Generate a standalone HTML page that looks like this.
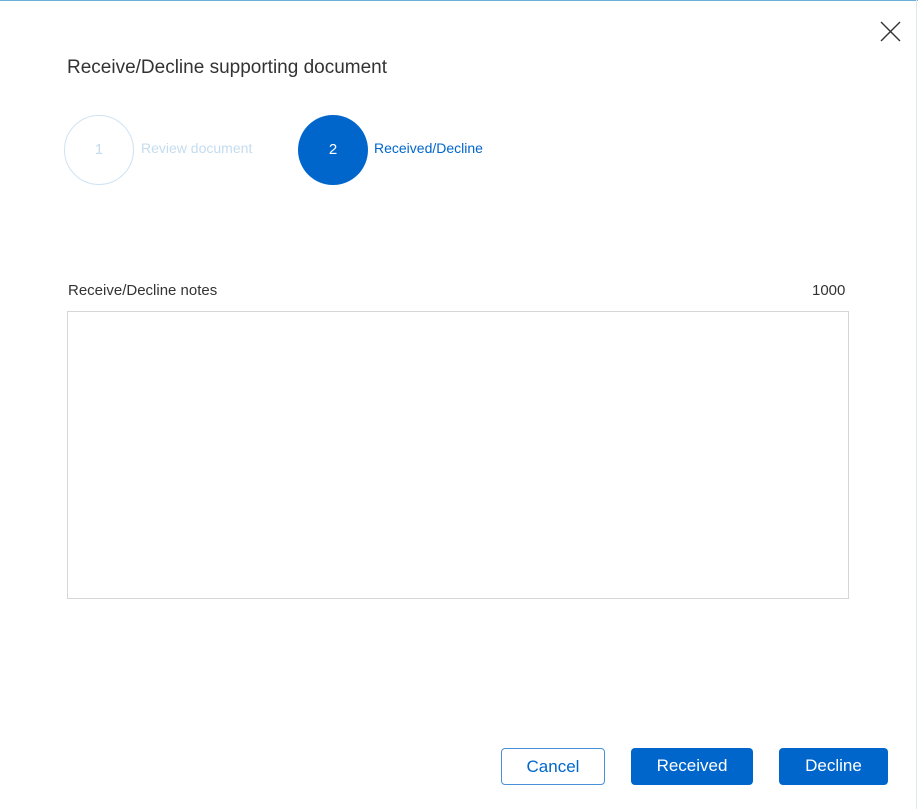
<!DOCTYPE html>
<html><head><style>
body{margin:0;width:918px;height:809px;background:#fff;font-family:"Liberation Sans",sans-serif;position:relative;overflow:hidden}
.top{position:absolute;left:0;top:0;width:918px;height:1px;background:#6ab0d8}
.right{position:absolute;right:1px;top:0;width:1px;height:809px;background:#dfe8ee}
.t{position:absolute;white-space:nowrap}
.c{position:absolute;width:70px;height:70px;border-radius:50%;box-sizing:border-box;text-align:center;line-height:68px;font-size:15px}
.b{position:absolute;top:748px;height:37px;box-sizing:border-box;border-radius:4px;text-align:center;line-height:36px;font-size:17px}
</style></head><body>
<div class="top"></div><div class="right"></div>
<svg style="position:absolute;left:880px;top:21px" width="21" height="21"><path d="M1 1L20 20M20 1L1 20" stroke="#333" stroke-width="1.4"/></svg>
<div class="t" style="left:67px;top:57px;font-size:19px;color:#333">Receive/Decline supporting document</div>
<div class="c" style="left:64px;top:115px;border:1px solid #cfe3f3;color:#c4dcf0">1</div>
<div class="t" style="left:141px;top:140px;font-size:14px;color:#c4dcf0">Review document</div>
<div class="c" style="left:298px;top:115px;background:#0066cc;color:#fff;line-height:70px">2</div>
<div class="t" style="left:374px;top:140px;font-size:14px;color:#0066cc">Received/Decline</div>
<div class="t" style="left:68px;top:282px;font-size:15px;color:#333">Receive/Decline notes</div>
<div class="t" style="left:812px;top:282px;font-size:15px;color:#333">1000</div>
<div style="position:absolute;left:67px;top:311px;width:782px;height:288px;box-sizing:border-box;border:1px solid #d6d6d6"></div>
<div class="b" style="left:501px;width:104px;border:1px solid #4a90d9;color:#0066cc">Cancel</div>
<div class="b" style="left:631px;width:122px;background:#0066cc;color:#fff">Received</div>
<div class="b" style="left:779px;width:109px;background:#0066cc;color:#fff">Decline</div>
</body></html>
